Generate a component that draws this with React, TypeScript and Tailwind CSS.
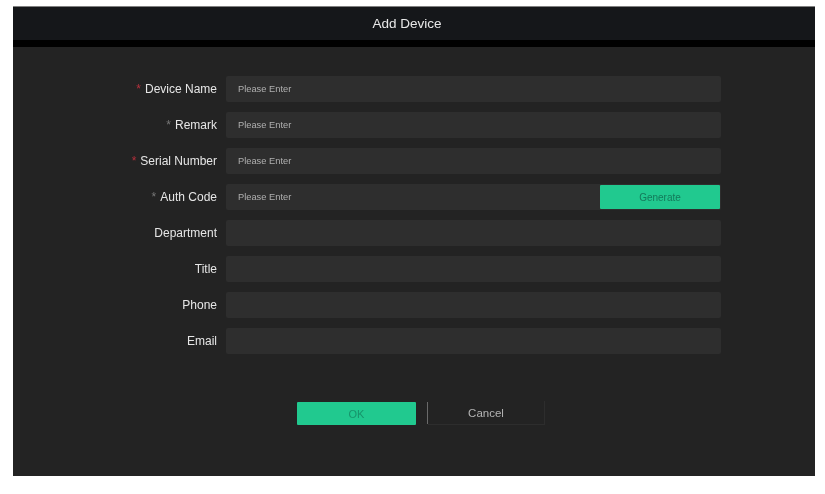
import React from 'react';

type Field = {
    label: string;
    mark?: 'red' | 'dim';
    placeholder?: string;
    generate?: boolean;
};

const fields: Field[] = [
    { label: 'Device Name', mark: 'red', placeholder: 'Please Enter' },
    { label: 'Remark', mark: 'dim', placeholder: 'Please Enter' },
    { label: 'Serial Number', mark: 'red', placeholder: 'Please Enter' },
    { label: 'Auth Code', mark: 'dim', placeholder: 'Please Enter', generate: true },
    { label: 'Department' },
    { label: 'Title' },
    { label: 'Phone' },
    { label: 'Email' },
];

export default function App() {
    return (
        <div className="h-[494px] w-[825px] bg-white pt-[6px] pl-[13px] font-['Liberation_Sans',sans-serif]">
            <div className="flex h-[470px] w-[802px] flex-col bg-[#232323]">
                <div className="flex h-[34px] items-center justify-center border-t border-[#808080] bg-[#15171a] pt-[2px] pr-[14px] text-[13.5px] text-[#e8e8e8]">
                    <span className="inline-block blur-[0.5px]">Add Device</span>
                </div>
                <div className="h-[7px] bg-black"></div>

                <div className="mt-[29px] flex flex-col gap-[10px]">
                    {fields.map((f) => (
                        <div key={f.label} className="flex h-[26px] items-center">
                            <div className="w-[204px] text-right text-[12px] whitespace-nowrap text-[#e6e6e6]">
                                <span className="inline-block blur-[0.5px]">
                                    {f.mark === 'red' && <span className="mr-[4px] text-[#b5303c]">*</span>}
                                    {f.mark === 'dim' && <span className="mr-[4px] text-[#777777]">*</span>}
                                    {f.label}
                                </span>
                            </div>
                            <div className="ml-[9px] flex h-full w-[495px] items-center justify-between rounded-[2px] bg-[#2e2e2e] pl-[12px]">
                                <span className="inline-block pt-[2px] text-[9.3px] text-[#b0b0b0] blur-[0.5px]">{f.placeholder}</span>
                                {f.generate && (
                                    <button className="mr-[1px] h-[24px] w-[120px] rounded-[1px] bg-[#21c98f] text-[10px] text-[#147a5a]">
                                        <span className="inline-block blur-[0.5px]">Generate</span>
                                    </button>
                                )}
                            </div>
                        </div>
                    ))}
                </div>

                <div className="mt-[47px] ml-[284px] flex h-[24px] items-center">
                    <button className="h-[23px] w-[119px] rounded-[1px] bg-[#21c98f] pt-[2px] text-[11px] text-[#17946b]">
                        <span className="inline-block blur-[0.5px]">OK</span>
                    </button>
                    <div className="ml-[11px] h-[22px] w-[1px] bg-[#6a6a6a]"></div>
                    <button className="h-[24px] w-[117px] border-r border-b border-[#2d2d2d] pt-[2px] text-[11.5px] text-[#b4b4b4]">
                        <span className="inline-block blur-[0.5px]">Cancel</span>
                    </button>
                </div>
            </div>
        </div>
    );
}
